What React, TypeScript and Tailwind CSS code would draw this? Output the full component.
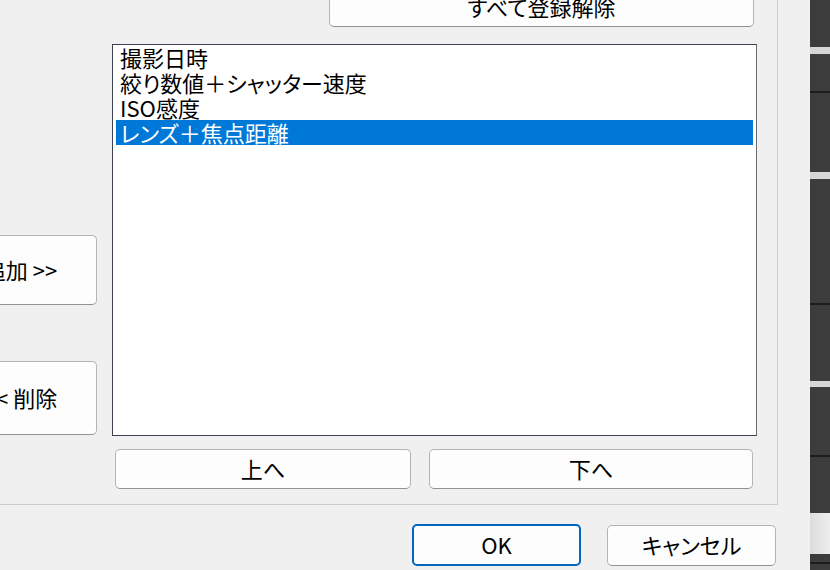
import React from "react";

const font = "[font-family:'Noto_Sans_CJK_JP','Noto_Sans_JP',sans-serif]";

function Btn({
  className,
  children,
  primary,
}: {
  className: string;
  children: React.ReactNode;
  primary?: boolean;
}) {
  return (
    <div
      className={
        "shrink-0 flex items-center justify-center pb-[3px] rounded-[5px] bg-[#fdfdfd] text-black text-[22px] leading-none whitespace-nowrap [font-feature-settings:'palt'] " +
        (primary
          ? "border-2 border-[#0067c0] "
          : "border border-[#b4b4b4] border-b-[#919191] ") +
        className
      }
    >
      {children}
    </div>
  );
}

const items = ["撮影日時", "絞り数値＋シャッター速度", "ISO感度", "レンズ＋焦点距離"];

export default function App() {
  return (
    <div
      className={
        "w-[830px] h-[570px] overflow-hidden bg-[#f0f0f0] flex " + font
      }
    >
      <div className="w-[810px] shrink-0 flex flex-col">
        <div className="w-[778px] h-[505px] shrink-0 border-r border-b border-[#cdcdcd] flex flex-col">
          <Btn className="ml-[329px] mt-[-13px] w-[425px] h-[40px]">
            すべて登録解除
          </Btn>
          <div className="flex mt-[17px] h-[392px] shrink-0">
            <div className="ml-[-56px] w-[153px] shrink-0 flex flex-col pt-[191px] gap-[56px]">
              <Btn className="w-[153px] h-[70px]">追加 &gt;&gt;</Btn>
              <Btn className="w-[153px] h-[74px]">&lt;&lt; 削除</Btn>
            </div>
            <div className="ml-[15px] w-[645px] h-[392px] shrink-0 bg-white border border-[#3d4352] border-r-[#6c6c6c] px-[3px] flex flex-col">
              {items.map((t, i) => (
                <div
                  key={t}
                  className={
                    "h-[25px] shrink-0 leading-[24px] pl-[4px] text-[22px] whitespace-nowrap [font-feature-settings:'palt'] " +
                    (i === 3 ? "bg-[#0078d7] text-white" : "text-black")
                  }
                >
                  {t}
                </div>
              ))}
            </div>
          </div>
          <div className="flex mt-[13px] ml-[115px] gap-[18px]">
            <Btn className="w-[296px] h-[40px]">上へ</Btn>
            <Btn className="w-[324px] h-[40px]">下へ</Btn>
          </div>
        </div>
        <div className="flex ml-[412px] mt-[19px] gap-[26px]">
          <Btn primary className="w-[169px] h-[42px]">
            OK
          </Btn>
          <Btn className="w-[169px] h-[41px] mt-[1px]">キャンセル</Btn>
        </div>
      </div>
      <div className="w-[20px] shrink-0 flex flex-col bg-[#3c3c3c]">
        <div className="h-[47px] shrink-0" />
        <div className="h-[7px] shrink-0 bg-[#d6d6d6]" />
        <div className="h-[37px] shrink-0" />
        <div className="h-[2px] shrink-0 bg-[#1c1c1c]" />
        <div className="h-[79px] shrink-0" />
        <div className="h-[7px] shrink-0 bg-[#d6d6d6]" />
        <div className="h-[124px] shrink-0" />
        <div className="h-[2px] shrink-0 bg-[#1c1c1c]" />
        <div className="h-[76px] shrink-0" />
        <div className="h-[6px] shrink-0 bg-[#d6d6d6]" />
        <div className="h-[68px] shrink-0" />
        <div className="h-[2px] shrink-0 bg-[#1c1c1c]" />
        <div className="h-[56px] shrink-0" />
        <div className="h-[41px] shrink-0 bg-gradient-to-r from-[#dcdcdc] to-[#eeeeee]" />
        <div className="h-[8px] shrink-0" />
        <div className="h-[2px] shrink-0 bg-[#1c1c1c]" />
        <div className="h-[6px] shrink-0" />
      </div>
    </div>
  );
}
